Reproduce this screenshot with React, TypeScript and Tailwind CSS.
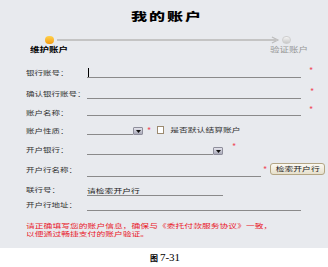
const font = { fontFamily: '"Noto Sans CJK SC", "Liberation Sans", sans-serif' };

function Squash({ children, className = '' }: { children: React.ReactNode; className?: string }) {
  return <span className={`inline-block scale-y-[0.68] whitespace-nowrap ${className}`}>{children}</span>;
}

function Star({ className = '' }: { className?: string }) {
  return <span className={`text-[9px] leading-none text-[#ef4d5a] ${className}`}>*</span>;
}

function DropBtn() {
  return (
    <div className="w-[10px] h-[8px] self-end rounded-[1px] bg-gradient-to-b from-[#e4e4ec] to-[#a9a9b8] border border-[#8f8f9c] flex items-center justify-center">
      <svg width="5" height="3" viewBox="0 0 5 3">
        <path d="M0 0h5L2.5 3z" fill="#111" />
      </svg>
    </div>
  );
}

function Row({ label, top, children }: { label: string; top: string; children?: React.ReactNode }) {
  return (
    <div className={`flex items-center h-[12px] ${top}`}>
      <div className="w-[61px] text-[8.5px] leading-none text-[#333]">
        <Squash>{label}</Squash>
      </div>
      {children}
    </div>
  );
}

export default function App() {
  return (
    <div className="w-[328px] h-[267px] bg-white overflow-hidden" style={font}>
      <div className="h-[248px] bg-[#e8eaee] flex flex-col pl-[26px]">
        <div className="mt-[6px] h-[20px] flex justify-center items-center -ml-[20px]">
          <Squash className="text-[16px] font-black tracking-[2px] text-black leading-none scale-y-[0.6]">我的账户</Squash>
        </div>

        <div className="mt-[10px] ml-[19px] w-[246px] flex items-center h-[8px]">
          <div className="w-[9px] h-[8px] rounded-full bg-gradient-to-b from-[#ffd24a] to-[#f39a0b]" />
          <svg className="flex-1" height="8" viewBox="0 0 226 8" preserveAspectRatio="none">
            <line x1="3" y1="4" x2="220" y2="4" stroke="#c4c4c4" strokeWidth="2" />
            <path d="M216 1 L222 4 L216 7" fill="none" stroke="#bdbdbd" strokeWidth="1.2" />
          </svg>
          <div className="w-[9px] h-[8px] rounded-full bg-gradient-to-b from-[#f4f4f4] to-[#c9c9c9] border border-[#cfcfcf]" />
        </div>
        <div className="mt-[0px] ml-[4px] w-[278px] flex justify-between text-[9.5px] leading-[10px]">
          <Squash className="font-bold text-black">维护账户</Squash>
          <Squash className="text-[#9a9a9a]">验证账户</Squash>
        </div>

        <Row label="银行账号：" top="mt-[12px]">
          <div className="w-[214px] h-[10px] self-end border-b border-[#8a8a8a] relative">
            <div className="absolute left-[1px] top-0 w-px h-[9px] bg-black" />
          </div>
          <Star className="ml-[8px] mt-[-4px]" />
        </Row>

        <Row label="确认银行账号：" top="mt-[9px]">
          <div className="w-[214px] h-[9px] self-end border-b border-[#8a8a8a]" />
          <Star className="ml-[9px] mt-[-4px]" />
        </Row>

        <Row label="账户名称：" top="mt-[7px]">
          <div className="w-[214px] h-[8px] self-end mb-[2px] border-b border-[#8a8a8a]" />
          <Star className="ml-[8px] mt-[-6px]" />
        </Row>

        <Row label="账户性质：" top="mt-[6px]">
          <div className="flex items-end self-end mb-[1px]">
            <div className="w-[46px] h-[8px] border-b border-[#8a8a8a]" />
            <DropBtn />
          </div>
          <Star className="ml-[4px]" />
          <div className="ml-[6px] w-[7px] h-[8px] border border-[#9c8a70] bg-white" />
          <div className="ml-[6px] text-[8.8px] leading-none text-[#333]">
            <Squash>是否默认结算账户</Squash>
          </div>
        </Row>

        <Row label="开户银行：" top="mt-[7px]">
          <div className="flex items-end self-end">
            <div className="w-[126px] h-[8px] border-b border-[#8a8a8a]" />
            <DropBtn />
          </div>
          <Star className="ml-[9px] mt-[-6px]" />
        </Row>

        <Row label="开户行名称：" top="mt-[8px]">
          <div className="w-[174px] h-[10px] self-end mb-[-2px] border-b border-[#8a8a8a]" />
          <Star className="ml-[2px]" />
          <div className="ml-[3px] w-[55px] h-[12px] rounded-[3px] border border-[#b3a584] bg-gradient-to-b from-[#fbf9f2] to-[#e6e0cc] flex items-center justify-center text-[8.8px] leading-none text-[#222]">
            <Squash>检索开户行</Squash>
          </div>
        </Row>

        <Row label="联行号：" top="mt-[8px]">
          <div className="w-[136px] h-[10px] self-end mb-[-1px] border-b border-[#8a8a8a] text-[8.8px] leading-[10px] text-[#222]">
            <Squash>请检索开户行</Squash>
          </div>
        </Row>

        <Row label="开户行地址：" top="mt-[3px]">
          <div className="w-[214px] h-[10px] self-end mb-[-1px] border-b border-[#8a8a8a]" />
        </Row>

        <div className="mt-[12px] text-[8.8px] leading-[7.5px] text-[#e8202a] flex flex-col">
          <Squash className="scale-y-[0.58]">请正确填写您的账户信息，确保与《委托付款服务协议》一致，</Squash>
          <Squash className="scale-y-[0.58]">以便通过畅捷支付的账户验证。</Squash>
        </div>
      </div>

      <div className="flex justify-center items-center h-[19px] pl-[2px] gap-[2px] text-black">
        <span className="text-[8px] font-bold leading-none">图</span>
        <span className="text-[11px] leading-none" style={{ fontFamily: '"Liberation Serif", serif' }}>7-31</span>
      </div>
    </div>
  );
}
